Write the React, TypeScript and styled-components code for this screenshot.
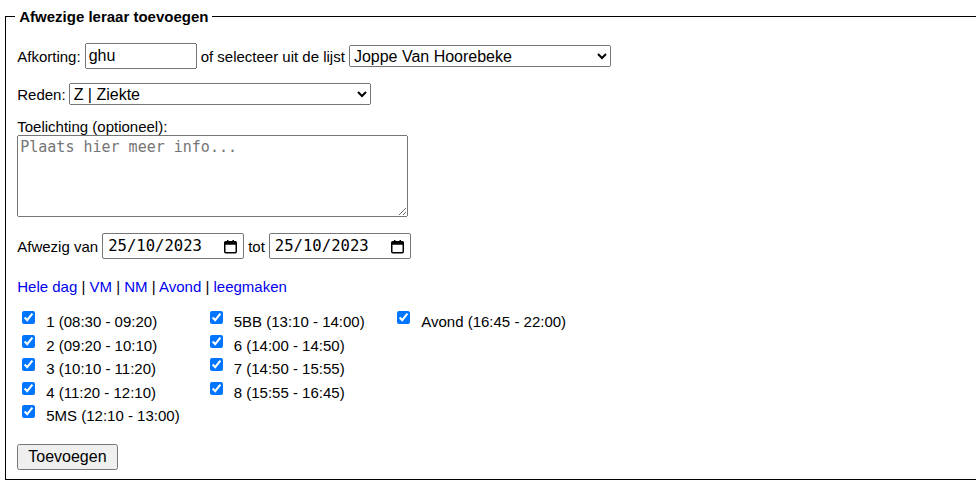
import React from "react";
import styled, { createGlobalStyle } from "styled-components";

const GlobalStyle = createGlobalStyle`
  html, body { overflow: hidden; }
  body {
    margin: 8px 0 0 3px;
    font-family: Arial, "Liberation Sans", sans-serif;
    font-size: 15px;
    color: #000;
    background: #fff;
  }
`;

const Fieldset = styled.fieldset`
  width: 1100px;
  margin: 0 2px;
  border: 1px solid #000;
  padding: 5px 11.25px 9px;
  box-sizing: border-box;
  display: flex;
  flex-direction: column;
  align-items: flex-start;
`;

const Legend = styled.legend`
  font-weight: bold;
  font-size: 15px;
  padding: 0 4px;
  margin-left: -2px;
`;

const Row = styled.div<{ $top: number }>`
  display: flex;
  align-items: center;
  margin-top: ${(p) => p.$top}px;
  white-space: nowrap;
`;

const Text = styled.span<{ $gap?: number }>`
  margin-right: ${(p) => p.$gap ?? 4}px;
`;

const TextInput = styled.input`
  font-family: Arial, "Liberation Sans", sans-serif;
  font-size: 16px;
  width: 112px;
  height: 26px;
  box-sizing: border-box;
  padding: 2px 2px;
  margin: 0 4px 0 0;
`;

const Select = styled.select<{ $w: number }>`
  font-family: Arial, "Liberation Sans", sans-serif;
  font-size: 16px;
  width: ${(p) => p.$w}px;
  height: 22px;
  box-sizing: border-box;
  margin: 0;
  color: #000;
`;

const Label = styled.label`
  display: block;
  margin-top: 13px;
  line-height: 17px;
`;

const TextArea = styled.textarea`
  display: block;
  width: 391px;
  height: 82px;
  box-sizing: border-box;
  font-family: "DejaVu Sans Mono", monospace;
  font-size: 15px;
  margin: 0;
  padding: 2px 2px;
  resize: both;
  &::placeholder { color: #757575; }
`;

const DateField = styled.div`
  display: inline-flex;
  align-items: center;
  justify-content: space-between;
  width: 142px;
  height: 26px;
  box-sizing: border-box;
  border: 1px solid #767676;
  border-radius: 2px;
  padding: 0 5px 0 5px;
  margin-right: 4px;
  font-family: "DejaVu Sans Mono", monospace;
  font-size: 15.6px;
  background: #fff;
  cursor: text;
`;

const DateText = styled.span`
  line-height: 18px;
`;

const CalendarIcon = styled.svg`
  width: 15px;
  height: 15px;
  flex: none;
`;

const Links = styled.div`
  margin-top: 19px;
  line-height: 17px;
  white-space: nowrap;
`;

const Link = styled.a`
  color: #0000ee;
  text-decoration: none;
  cursor: pointer;
`;

const Grid = styled.div`
  margin-top: 13px;
  display: grid;
  grid-template-columns: repeat(3, 187.5px);
`;

const Column = styled.div`
  display: flex;
  flex-direction: column;
`;

const Item = styled.label`
  display: flex;
  align-items: flex-start;
  height: 23.5px;
  white-space: nowrap;
`;

const Check = styled.input`
  width: 13px;
  height: 13px;
  margin: 3px 11px 0 5px;
  flex: none;
`;

const ItemText = styled.span`
  padding-top: 5px;
  line-height: 17px;
`;

const Button = styled.button`
  margin-top: 18.5px;
  font-family: Arial, "Liberation Sans", sans-serif;
  font-size: 16px;
  padding: 2px 9px;
  height: 26px;
  box-sizing: border-box;
`;

const columns: string[][] = [
  ["1 (08:30 - 09:20)", "2 (09:20 - 10:10)", "3 (10:10 - 11:20)", "4 (11:20 - 12:10)", "5MS (12:10 - 13:00)"],
  ["5BB (13:10 - 14:00)", "6 (14:00 - 14:50)", "7 (14:50 - 15:55)", "8 (15:55 - 16:45)"],
  ["Avond (16:45 - 22:00)"],
];

function DateBox({ value }: { value: string }) {
  return (
    <DateField>
      <DateText>{value}</DateText>
      <CalendarIcon viewBox="0 0 15 15" aria-hidden="true">
        <rect x="1.75" y="2.75" width="11.5" height="11" rx="1" fill="none" stroke="#000" strokeWidth="1.5" />
        <rect x="1.75" y="2.75" width="11.5" height="3" fill="#000" />
        <rect x="4" y="1" width="1.5" height="2.5" fill="#000" />
        <rect x="9.5" y="1" width="1.5" height="2.5" fill="#000" />
      </CalendarIcon>
    </DateField>
  );
}

export default function App() {
  return (
    <>
      <GlobalStyle />
      <Fieldset>
        <Legend>Afwezige leraar toevoegen</Legend>
        <Row $top={13}>
          <Text $gap={4}>Afkorting:</Text>
          <TextInput defaultValue="ghu" />
          <Text>of selecteer uit de lijst</Text>
          <Select $w={262} defaultValue="jvh">
            <option value="jvh">Joppe Van Hoorebeke</option>
          </Select>
        </Row>
        <Row $top={14}>
          <Text $gap={3}>Reden:</Text>
          <Select $w={302} defaultValue="z">
            <option value="z">Z | Ziekte</option>
          </Select>
        </Row>
        <Label>Toelichting (optioneel):</Label>
        <TextArea placeholder="Plaats hier meer info..." />
        <Row $top={16}>
          <Text $gap={4}>Afwezig van</Text>
          <DateBox value="25/10/2023" />
          <Text>tot</Text>
          <DateBox value="25/10/2023" />
        </Row>
        <Links>
          <Link>Hele dag</Link> | <Link>VM</Link> | <Link>NM</Link> | <Link>Avond</Link> | <Link>leegmaken</Link>
        </Links>
        <Grid>
          {columns.map((col, ci) => (
            <Column key={ci}>
              {col.map((t) => (
                <Item key={t}>
                  <Check type="checkbox" defaultChecked />
                  <ItemText>{t}</ItemText>
                </Item>
              ))}
            </Column>
          ))}
        </Grid>
        <Button>Toevoegen</Button>
      </Fieldset>
    </>
  );
}
